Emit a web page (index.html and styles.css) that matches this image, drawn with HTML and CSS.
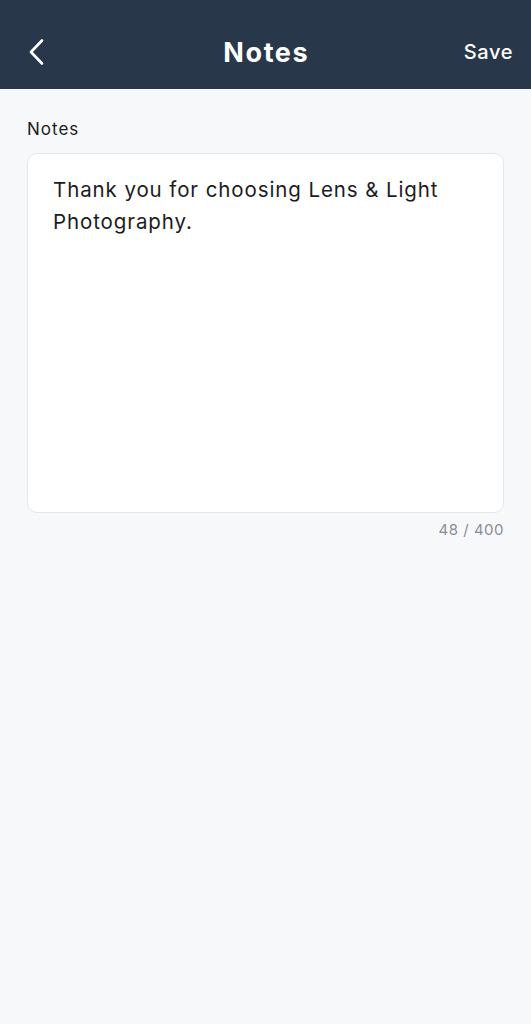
FILE: index.html
```html
<!DOCTYPE html>
<html lang="en">
<head>
<meta charset="utf-8">
<title>Notes</title>
<link rel="stylesheet" href="styles.css">
</head>
<body>
<header class="topbar">
  <button class="back" aria-label="Back">
    <svg width="18" height="28" viewBox="0 0 18 28"><path d="M15 2.5 L4 14 L15 25.5" fill="none" stroke="#fff" stroke-width="2.6" stroke-linecap="round" stroke-linejoin="round"/></svg>
  </button>
  <h1 class="title">Notes</h1>
  <button class="save">Save</button>
</header>
<main class="content">
  <label class="label">Notes</label>
  <div class="box">
    <p class="text">Thank you for choosing Lens &amp; Light Photography.</p>
  </div>
  <div class="counter">48 / 400</div>
</main>
</body>
</html>
```
FILE: styles.css
```css
* { box-sizing: border-box; }
html, body { margin: 0; padding: 0; }
body {
  font-family: Inter, "Noto Sans", "Liberation Sans", sans-serif;
  background: #f7f8fa;
  min-height: 1024px;
  color: #1c1c1e;
}
.topbar {
  height: 89px;
  background: #283749;
  display: grid;
  grid-template-columns: 1fr auto 1fr;
  align-items: center;
  padding: 15px 18px 0 18px;
}
.back {
  justify-self: start;
  margin-left: 9px;
  background: none;
  border: 0;
  padding: 0;
  display: flex;
  align-items: center;
}
.title {
  margin: 0;
  color: #fff;
  font-size: 27px;
  font-weight: 700;
  letter-spacing: 1.6px;
  margin-right: -1.6px;
}
.save {
  justify-self: end;
  background: none;
  border: 0;
  padding: 0;
  color: #fff;
  font-family: inherit;
  font-size: 20px;
  font-weight: 500;
  letter-spacing: 0.6px;
}
.content {
  padding: 29px 27px 0;
  display: flex;
  flex-direction: column;
}
.label {
  font-size: 17px;
  letter-spacing: 1px;
  color: #1c1c1e;
  line-height: 22px;
  margin-bottom: 13px;
}
.box {
  height: 360px;
  background: #fff;
  border: 1px solid #e4e6ea;
  border-radius: 10px;
  padding: 20px 25px;
}
.text {
  margin: 0;
  font-size: 20.5px;
  line-height: 32px;
  letter-spacing: 0.9px;
  color: #1c1c1e;
}
.counter {
  align-self: flex-end;
  margin-top: 7px;
  font-size: 15px;
  color: #8a8d93;
  letter-spacing: 0.5px;
}
```
